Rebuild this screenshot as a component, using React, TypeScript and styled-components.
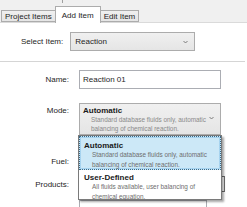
import React from 'react';
import styled, { createGlobalStyle } from 'styled-components';

const GlobalStyle = createGlobalStyle`
  html, body {
    margin: 0;
    padding: 0;
    background: #ffffff;
  }
  body {
    font-family: "Liberation Sans", Arial, sans-serif;
    font-size: 8px;
    color: #1e1e1e;
  }
`;

const Page = styled.div`
  position: relative;
  width: 247px;
  height: 207px;
  overflow: hidden;
  background: #ffffff;
`;

const TopBar = styled.div`
  position: relative;
  height: 22px;
  display: flex;
  align-items: flex-end;
  padding-left: 2px;
  background: #f0f0f0;
  border-bottom: 1px solid #dadada;
`;

const Splitter = styled.div`
  position: absolute;
  left: 62px;
  top: 0;
  width: 1px;
  height: 3px;
  background: #a0a0a0;
`;

const Tab = styled.div<{ $active?: boolean }>`
  box-sizing: border-box;
  height: ${(p) => (p.$active ? '17px' : '12px')};
  margin-bottom: ${(p) => (p.$active ? '-1px' : '0')};
  padding: 0 ${(p) => (p.$active ? '6px' : '3px')};
  display: flex;
  align-items: center;
  border: 1px solid #acacac;
  border-bottom: ${(p) => (p.$active ? 'none' : '1px solid #acacac')};
  margin-left: -1px;
  background: ${(p) => (p.$active ? '#ffffff' : 'linear-gradient(#f0f0f0, #e5e5e5)')};
  z-index: ${(p) => (p.$active ? 1 : 0)};
  white-space: nowrap;
`;

const SelectRow = styled.div`
  display: flex;
  align-items: center;
  padding: 9px 0 0 21px;
  gap: 7px;
`;

const Combo = styled.div<{ $width: number; $tall?: boolean }>`
  box-sizing: border-box;
  width: ${(p) => p.$width}px;
  height: ${(p) => (p.$tall ? '32px' : '19px')};
  position: relative;
  display: flex;
  flex-direction: column;
  justify-content: ${(p) => (p.$tall ? 'flex-start' : 'center')};
  padding: ${(p) => (p.$tall ? '2px 0 0 3px' : '0 0 0 4px')};
  border: 1px solid #acacac;
  background: linear-gradient(#f0f0f0, #e5e5e5);
`;

const Chevron = styled.svg<{ $top: number }>`
  position: absolute;
  right: 6px;
  top: ${(p) => p.$top}px;
  width: 5px;
  height: 4px;
`;

const Separator = styled.div`
  margin-top: 10px;
  width: 245px;
  height: 1px;
  background: #d5d5d5;
`;

const Form = styled.div`
  display: flex;
  flex-direction: column;
`;

const Row = styled.div<{ $mt: number; $h: number }>`
  display: flex;
  margin-top: ${(p) => p.$mt}px;
  height: ${(p) => p.$h}px;
`;

const Label = styled.div<{ $top?: boolean }>`
  box-sizing: border-box;
  width: 79px;
  flex: none;
  text-align: right;
  padding-right: 10px;
  align-self: ${(p) => (p.$top ? 'flex-start' : 'center')};
  padding-top: ${(p) => (p.$top ? '3px' : '0')};
`;

const TextBox = styled.div`
  box-sizing: border-box;
  width: 142px;
  height: 19px;
  display: flex;
  align-items: center;
  padding-left: 3px;
  border: 1px solid #abadb3;
  background: #ffffff;
`;

const FieldBox = styled.div<{ $dark?: boolean; $open?: boolean }>`
  box-sizing: border-box;
  width: ${(p) => (p.$dark ? '146px' : '128px')};
  height: ${(p) => (p.$open ? '20px' : '100%')};
  border: 1px solid ${(p) => (p.$dark ? '#707070' : '#abadb3')};
  background: #ffffff;
`;

const Title = styled.div`
  font-weight: bold;
  line-height: 9px;
  color: #1a1a1a;
`;

const Desc = styled.div<{ $shade: string }>`
  font-size: 6.4px;
  line-height: 9.5px;
  padding-left: 8px;
  color: ${(p) => p.$shade};
  white-space: nowrap;
`;

const Dropdown = styled.div`
  position: absolute;
  left: 78px;
  top: 135px;
  width: 144px;
  height: 65px;
  box-sizing: border-box;
  border: 1px solid #7a7a7a;
  background: #ffffff;
  box-shadow: 2px 2px 2px rgba(0, 0, 0, 0.35);
  z-index: 5;
`;

const Option = styled.div<{ $selected?: boolean }>`
  box-sizing: border-box;
  height: ${(p) => (p.$selected ? '34px' : '29px')};
  padding: ${(p) => (p.$selected ? '4px 0 0 4px' : '3px 0 0 5px')};
  background: ${(p) => (p.$selected ? '#cce8f7' : '#ffffff')};
  border: ${(p) => (p.$selected ? '1px dotted #3b6a88' : 'none')};
  box-shadow: ${(p) => (p.$selected ? 'inset 0 0 0 1px #a6d3ef' : 'none')};
`;

const ChevronIcon: React.FC<{ top: number }> = ({ top }) => (
  <Chevron $top={top} viewBox="0 0 5 4">
    <path d="M0.5 1 L2.5 3 L4.5 1" fill="none" stroke="#707070" strokeWidth="0.9" />
  </Chevron>
);

const App: React.FC = () => {
  return (
    <>
      <GlobalStyle />
      <Page>
        <TopBar>
          <Splitter />
          <Tab>Project Items</Tab>
          <Tab $active>Add Item</Tab>
          <Tab>Edit Item</Tab>
        </TopBar>

        <SelectRow>
          <span>Select Item:</span>
          <Combo $width={125}>
            Reaction
            <ChevronIcon top={7} />
          </Combo>
        </SelectRow>

        <Separator />

        <Form>
          <Row $mt={8} $h={19}>
            <Label>Name:</Label>
            <TextBox>Reaction 01</TextBox>
          </Row>

          <Row $mt={14} $h={32}>
            <Label $top>Mode:</Label>
            <Combo $width={142} $tall>
              <Title>Automatic</Title>
              <Desc $shade="#8a8a8a">Standard database fluids only, automatic</Desc>
              <Desc $shade="#8a8a8a" style={{ marginTop: '-1px' }}>
                balancing of chemical reaction.
              </Desc>
              <ChevronIcon top={12} />
            </Combo>
          </Row>

          <Row $mt={16} $h={20}>
            <Label>Fuel:</Label>
            <FieldBox />
          </Row>

          <Row $mt={5} $h={16}>
            <Label>Products:</Label>
            <FieldBox $dark />
          </Row>

          <Row $mt={8} $h={20}>
            <Label />
            <FieldBox $open />
          </Row>
        </Form>

        <Dropdown>
          <Option $selected>
            <Title>Automatic</Title>
            <Desc $shade="#6e6e6e">Standard database fluids only, automatic</Desc>
            <Desc $shade="#6e6e6e">balancing of chemical reaction.</Desc>
          </Option>
          <Option>
            <Title>User-Defined</Title>
            <Desc $shade="#6e6e6e">All fluids available, user balancing of</Desc>
            <Desc $shade="#6e6e6e">chemical equation.</Desc>
          </Option>
        </Dropdown>
      </Page>
    </>
  );
};

export default App;
